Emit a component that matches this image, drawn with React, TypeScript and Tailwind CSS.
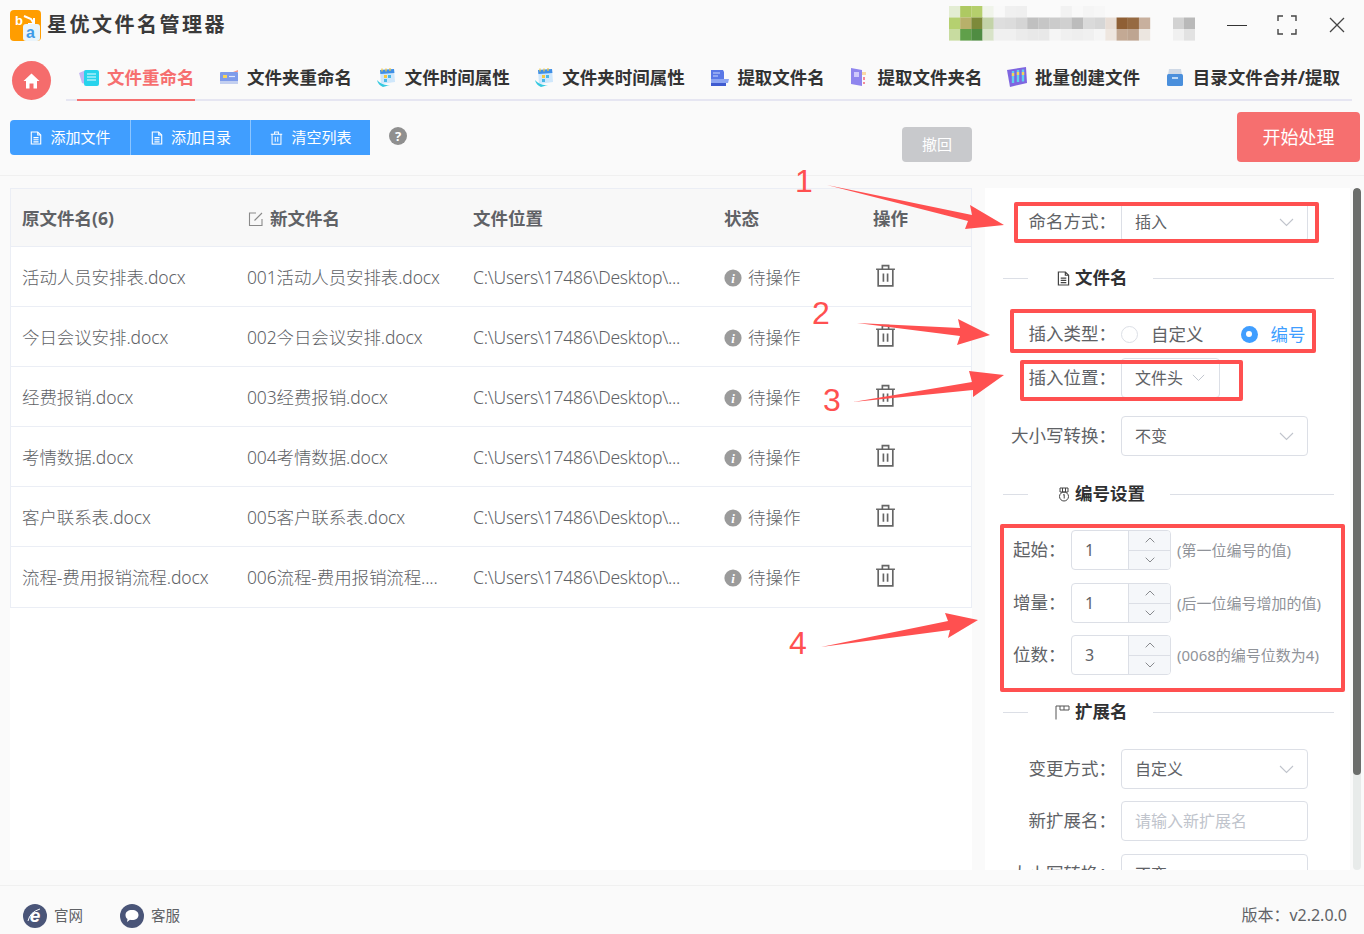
import React from 'react';

const FONT = "font-['Noto_Sans','Noto_Sans_CJK_SC',sans-serif]";

const rows = [
  { name: '活动人员安排表.docx', next: '001活动人员安排表.docx' },
  { name: '今日会议安排.docx', next: '002今日会议安排.docx' },
  { name: '经费报销.docx', next: '003经费报销.docx' },
  { name: '考情数据.docx', next: '004考情数据.docx' },
  { name: '客户联系表.docx', next: '005客户联系表.docx' },
  { name: '流程-费用报销流程.docx', next: '006流程-费用报销流程....' },
];

// mosaic that hides part of the window title
const mosaic = [
  ['#e3edd3', '#aec962', '#b5cf6c', '#f0f4ea', '#f9f9f9', '#f0f0f0', '#efefef', '#fafafa', '#fafafa', '#fafafa', '#f2f2f2', '#f9f9f9', '#f5f5f5', '#f7f7f7', '#fafafa', '#fafafa', '#fafafa', '#fafafa'],
  ['#b5d070', '#b8b06a', '#7d8a3a', '#c3d3a8', '#dedede', '#dcdcdc', '#d5d5d5', '#c0c0c0', '#c6c6c6', '#cbcbcb', '#d0d0d0', '#bcbcbc', '#dadada', '#d6d6d6', '#e8ddd5', '#8f5f35', '#966a42', '#c8b09e'],
  ['#c8dca0', '#60a04a', '#4f8c42', '#d8e3c8', '#f0f0f0', '#f0f0f0', '#ebebeb', '#e8e8e8', '#e8e8e8', '#f5f5f5', '#f0f0f0', '#eeeeee', '#f0f0f0', '#f5f5f5', '#eee6df', '#c3a994', '#bea591', '#ece6e0'],
];

function Mosaic() {
  return (
    <svg width="250" height="36" viewBox="0 0 250 36" className="shrink-0">
      {mosaic.map((row, y) =>
        row.map((c, x) => <rect key={`${x}-${y}`} x={x * 11.17} y={y * 11.5} width="11.3" height="11.6" fill={c} />)
      )}
      <rect x="224" y="11.5" width="11" height="11.6" fill="#d2d2d2" />
      <rect x="235" y="11.5" width="11" height="11.6" fill="#b9b9b9" />
      <rect x="224" y="23" width="11" height="11.6" fill="#f0f0f0" />
      <rect x="235" y="23" width="11" height="11.6" fill="#e2e2e2" />
    </svg>
  );
}

function Logo() {
  return (
    <svg width="31" height="31" viewBox="0 0 31 31" className="shrink-0">
      <rect width="31" height="31" rx="4" fill="#ff9d00" />
      <text x="5" y="15" fontSize="13" fontWeight="700" fill="#fff" fontFamily="Liberation Sans">b</text>
      <path d="M14 6 L21 9 L24 14 M24 8 V14 H18" fill="none" stroke="#fff" strokeWidth="2" />
      <rect x="13" y="14" width="17" height="17" rx="3" fill="#eaf4fb" />
      <text x="16" y="28" fontSize="16" fontWeight="700" fill="#3f9be8" fontFamily="Liberation Sans">a</text>
    </svg>
  );
}

function TabIcon({ i }: { i: number }) {
  if (i === 0)
    return (
      <svg width="20" height="18" viewBox="0 0 20 18">
        <path d="M0 5 L7 2 L9 17 L3 15Z" fill="#c3b6f2" />
        <rect x="5" y="2" width="15" height="16" rx="2" fill="#27d3ec" />
        <path d="M8 6h9M8 9h9M8 12h9" stroke="#e8fbff" strokeWidth="1.2" />
      </svg>
    );
  if (i === 1)
    return (
      <svg width="20" height="18" viewBox="0 0 20 18">
        <rect x="1" y="4" width="18" height="12" rx="1" fill="#7f9bea" />
        <rect x="1" y="13" width="18" height="3" fill="#c3cff0" />
        <rect x="4" y="7" width="4" height="3" fill="#f7d35a" />
        <path d="M10 8.5h6" stroke="#dfe6fb" strokeWidth="1.2" />
        <path d="M14 4l5-2v2z" fill="#f59a8e" />
      </svg>
    );
  if (i === 2 || i === 3)
    return (
      <svg width="19" height="20" viewBox="0 0 19 20">
        <path d="M3 3 L17 2 L18 15 L4 17Z" fill="#cfe7fb" />
        <path d="M3 3 L17 2 L17.4 6 L3.4 7Z" fill="#3f8fe6" />
        <path d="M5 1.5v3M9 1.5v3M13 1v3" stroke="#f5c842" strokeWidth="1.2" />
        <rect x="7" y="8" width="3" height="3" fill="#f5c842" />
        <rect x="11" y="8" width="3" height="3" fill="#49b8e8" />
        <rect x="7" y="12" width="3" height="3" fill="#49b8e8" />
        <path d="M0 13 Q5 19 13 18 L6 20 Q1 18 0 13Z" fill="#35c9e0" />
      </svg>
    );
  if (i === 4)
    return (
      <svg width="19" height="19" viewBox="0 0 19 19">
        <path d="M1 2h12l1 2v13H1z" fill="#5a78e6" />
        <path d="M3 5h7M3 8h5" stroke="#c9d5fb" strokeWidth="1.2" />
        <path d="M1 11h18l-1 4H1z" fill="#8da5f2" />
        <rect x="1" y="15" width="15" height="3" fill="#3f5bd0" />
      </svg>
    );
  if (i === 5)
    return (
      <svg width="18" height="20" viewBox="0 0 18 20">
        <path d="M1 1 L12 3 V19 L1 17Z" fill="#8f85ee" />
        <rect x="4" y="5" width="5" height="5" fill="#cfc9fb" />
        <rect x="12" y="5" width="4" height="3" fill="#fbd9a5" />
        <rect x="13" y="10" width="2" height="3" fill="#f58a9a" />
        <rect x="13" y="15" width="2" height="2" fill="#f58a9a" />
      </svg>
    );
  if (i === 6)
    return (
      <svg width="22" height="22" viewBox="0 0 22 22" className="shrink-0">
        <path d="M1 4 L20 1 L21 17 L4 21Z" fill="#7f66e0" />
        <path d="M7 5v12M12 4v12M17 3.5v12" stroke="#5fd0ef" strokeWidth="2.4" />
        <path d="M7 7v3M12 6v3M17 6v3" stroke="#f7d35a" strokeWidth="2.4" />
      </svg>
    );
  return (
    <svg width="18" height="19" viewBox="0 0 18 19">
      <path d="M3 1h12l1 6H2z" fill="#cfd9e6" />
      <rect x="1" y="6" width="16" height="12" rx="1.5" fill="#4a8fdc" />
      <rect x="6" y="9" width="6" height="2" fill="#bcd8f5" />
    </svg>
  );
}

function DocIcon({ color = '#fff', size = 14 }: { color?: string; size?: number }) {
  return (
    <svg width={size} height={size + 2} viewBox="0 0 14 16" fill="none" stroke={color} strokeWidth="1.3" className="shrink-0">
      <path d="M1.5 1h7.5l3.5 3.5V15h-11z" />
      <path d="M9 1v3.5h3.5M4 7.5h6M4 10h6M4 12.5h6" />
    </svg>
  );
}

function TrashIcon({ color, w, h }: { color: string; w: number; h: number }) {
  return (
    <svg width={w} height={h} viewBox="0 0 20 22" fill="none" stroke={color} strokeWidth="1.6" className="shrink-0">
      <path d="M1 5h18M7 5V1.5h6V5M3 5v16h14V5M8 9v8M12 9v8" />
    </svg>
  );
}

function Chevron({ up = false, size = 15, color = '#c0c4cc' }: { up?: boolean; size?: number; color?: string }) {
  return (
    <svg width={size} height={size * 0.6} viewBox="0 0 15 9" fill="none" stroke={color} strokeWidth="1.1">
      <path d={up ? 'M1 8 L7.5 1.5 L14 8' : 'M1 1 L7.5 7.5 L14 1'} />
    </svg>
  );
}

function InfoIcon() {
  return (
    <svg width="18" height="18" viewBox="0 0 18 18" className="shrink-0">
      <circle cx="9" cy="9" r="8.6" fill="#9b9b9b" />
      <text x="9" y="14" textAnchor="middle" fontSize="13" fontWeight="700" fontStyle="italic" fill="#fff" fontFamily="Liberation Serif">i</text>
    </svg>
  );
}

function Select({ value, className = 'w-[187px]' }: { value: string; className?: string }) {
  return (
    <div className={`${className} h-10 shrink-0 bg-white border border-[#dcdfe6] rounded-[4px] flex items-center justify-between pl-[13px] pr-[13px] text-[16px] text-[#606266]`}>
      <span>{value}</span>
      <Chevron />
    </div>
  );
}

function FormRow({ label, className = '', children }: { label: string; className?: string; children: React.ReactNode }) {
  return (
    <div className={`flex items-center h-10 ${className}`}>
      <div className="w-[131px] shrink-0 -mt-[2px] text-right text-[17.5px] text-[#606266] whitespace-nowrap">{label}</div>
      <div className="ml-[5px] flex items-center">{children}</div>
    </div>
  );
}

function Section({ title, icon, className = '' }: { title: string; icon: React.ReactNode; className?: string }) {
  return (
    <div className={`flex items-center h-6 ml-[18px] w-[331px] ${className}`}>
      <div className="w-[25px] h-px bg-[#dcdfe6]" />
      <div className="w-[42px] shrink-0 flex justify-end">{icon}</div>
      <div className="ml-[5px] -mt-[2px] text-[17.5px] font-bold text-[#303133] whitespace-nowrap">{title}</div>
      <div className="flex-1 ml-[25px] h-px bg-[#dcdfe6]" />
    </div>
  );
}

function NumberRow({ label, value, hint, className = '' }: { label: string; value: string; hint: string; className?: string }) {
  return (
    <div className={`flex items-center h-10 pl-[28px] ${className}`}>
      <div className="w-[58px] shrink-0 -mt-[2px] text-[17.5px] text-[#606266]">{label}</div>
      <div className="w-[100px] h-10 shrink-0 flex bg-white border border-[#dcdfe6] rounded-[4px] overflow-hidden">
        <div className="w-[56px] pl-[13px] text-[16px] leading-[38px] text-[#606266]">{value}</div>
        <div className="flex-1 flex flex-col bg-[#f5f7fa] border-l border-[#dcdfe6]">
          <div className="flex-1 flex items-center justify-center border-b border-[#dcdfe6]"><Chevron up size={10} color="#606266" /></div>
          <div className="flex-1 flex items-center justify-center"><Chevron size={10} color="#606266" /></div>
        </div>
      </div>
      <div className="ml-[6px] text-[15px] text-[#909399] whitespace-nowrap">{hint}</div>
    </div>
  );
}

export default function App() {
  return (
    <div className={`relative w-[1364px] h-[934px] overflow-hidden bg-[#fafafa] ${FONT}`}>
      {/* title bar */}
      <div className="h-[50px] flex items-center pl-[10px]">
        <Logo />
        <div className="ml-[6px] text-[20px] font-bold tracking-[2.5px] text-[#3a3a3a] whitespace-nowrap">星优文件名管理器</div>
        <div className="ml-[722px] -mt-[3px]"><Mosaic /></div>
        <div className="ml-[28px] w-5 h-px bg-[#333]" />
        <svg width="20" height="20" viewBox="0 0 20 20" fill="none" stroke="#444" strokeWidth="1.4" className="ml-[30px]">
          <path d="M1 6V1h5M14 1h5v5M19 14v5h-5M6 19H1v-5" />
        </svg>
        <svg width="16" height="16" viewBox="0 0 16 16" fill="none" stroke="#444" strokeWidth="1.3" className="ml-[32px]">
          <path d="M1 1l14 14M15 1L1 15" />
        </svg>
      </div>

      {/* tabs */}
      <div className="h-[51px] flex pl-[12px]">
        <div className="w-[39px] h-[39px] mt-[11px] rounded-full bg-[#f56c6c] flex items-center justify-center shrink-0">
          <svg width="17" height="16" viewBox="0 0 17 16" fill="#fff">
            <path d="M8.5 0.5 L16.5 8 H14 V15.5 H10.5 V10.5 H6.5 V15.5 H3 V8 H0.5Z" />
          </svg>
        </div>
        <div className="ml-[15px] w-[1286px] h-[51px] flex border-b-2 border-[#e6e6f2] pl-[11px]">
          {['文件重命名', '文件夹重命名', '文件时间属性', '文件夹时间属性', '提取文件名', '提取文件夹名', '批量创建文件', '目录文件合并/提取'].map((t, i) => (
            <div
              key={t}
              className={`h-[51px] flex items-center whitespace-nowrap text-[17.5px] font-bold border-b-2 pt-[5px] pl-[2px] mr-[22.6px] ${i === 0 ? 'text-[#f66f6f] border-[#f66f6f]' : 'text-[#333] border-transparent'}`}
            >
              <div className="w-[20px] flex justify-center mr-[8px]"><TabIcon i={i} /></div>
              {t}
            </div>
          ))}
        </div>
      </div>

      {/* toolbar */}
      <div className="h-[75px] flex border-b border-[#f0f0f0]">
        <div className="ml-[10px] mt-[19px] h-[35px] flex bg-[#409eff] rounded-l-[4px] text-white text-[15px]">
          <div className="w-[121px] pl-[1px] flex items-center justify-center gap-[8px] border-r border-[#8cc5ff]"><DocIcon size={12} />添加文件</div>
          <div className="w-[120px] pl-[1px] flex items-center justify-center gap-[8px] border-r border-[#8cc5ff]"><DocIcon size={12} />添加目录</div>
          <div className="w-[119px] pl-[1px] flex items-center justify-center gap-[8px]"><TrashIcon color="#fff" w={13} h={14} />清空列表</div>
        </div>
        <div className="ml-[19px] mt-[26px] w-[18px] h-[18px] rounded-full bg-[#8f8f8f] text-white text-[13px] font-bold leading-[18px] text-center">?</div>
        <div className="ml-[495px] mt-[26px] w-[70px] h-[35px] rounded-[4px] bg-[#c8c9cc] text-white text-[15px] flex items-center justify-center">撤回</div>
        <div className="ml-[265px] mt-[11px] w-[123px] h-[50px] rounded-[4px] bg-[#f66f6f] text-white text-[18px] flex items-center justify-center">开始处理</div>
      </div>

      {/* main */}
      <div className="flex pt-[12px] h-[709px] pl-[10px]">
        <div className="w-[962px] h-[682px] bg-white">
          <div className="border border-[#ebeef5]">
            <div className="grid grid-cols-[225px_226px_251px_149px_1fr] h-[58px] pt-[2px] items-center bg-[#f8f8f8] border-b border-[#ebeef5] text-[17.5px] font-bold text-[#606266]">
              <div className="pl-[11px]">原文件名(6)</div>
              <div className="pl-[12px] flex items-center gap-[6px]">
                <svg width="16" height="16" viewBox="0 0 16 16" fill="none" stroke="#8a8a8a" strokeWidth="1.1">
                  <path d="M8 2H1.5v12.5H14V8M6.5 9.5 L14 2" />
                </svg>
                新文件名
              </div>
              <div className="pl-[11px]">文件位置</div>
              <div className="pl-[11px]">状态</div>
              <div className="pl-[11px]">操作</div>
            </div>
            {rows.map((r, i) => (
              <div key={r.name} className={`grid grid-cols-[225px_226px_251px_149px_1fr] h-[60px] pt-[2px] items-center text-[17.5px] font-light text-[#606266] whitespace-nowrap border-b ${i < 5 ? 'border-[#ebeef5]' : 'border-transparent'}`}>
                <div className="pl-[11px] tracking-[-0.1px]">{r.name}</div>
                <div className="pl-[11px] tracking-[-0.13px]">{r.next}</div>
                <div className="pl-[11px] tracking-[-0.25px]">C:\Users\17486\Desktop\...</div>
                <div className="pl-[11px] flex items-center gap-[6px]"><InfoIcon />待操作</div>
                <div className="pl-[13px] -mt-[4px]"><TrashIcon color="#666" w={21} h={23} /></div>
              </div>
            ))}
          </div>
        </div>

        {/* settings panel */}
        <div className="ml-[13px] w-[365px] h-[682px] bg-white overflow-hidden pt-[14px] shrink-0">
          <FormRow label="命名方式："><Select value="插入" /></FormRow>
          <Section title="文件名" className="mt-6" icon={<DocIcon color="#444" size={13} />} />
          <FormRow label="插入类型：" className="mt-6">
            <div className="flex items-center text-[17.5px] text-[#606266]">
              <div className="w-[17px] h-[17px] rounded-full border border-[#dcdfe6] bg-white" />
              <span className="ml-[13px]">自定义</span>
              <div className="ml-[37px] w-[17px] h-[17px] rounded-full bg-[#409eff] flex items-center justify-center">
                <div className="w-[6px] h-[6px] rounded-full bg-white" />
              </div>
              <span className="ml-[13px] text-[#409eff]">编号</span>
            </div>
          </FormRow>
          <FormRow label="插入位置：" className="mt-1">
            <div className="w-[99px] h-10 bg-white border border-[#dcdfe6] rounded-[4px] flex items-center pl-[13px] text-[16px] text-[#606266] gap-[9px] whitespace-nowrap">
              文件头<Chevron size={13} />
            </div>
          </FormRow>
          <FormRow label="大小写转换：" className="mt-[18px]"><Select value="不变" /></FormRow>
          <Section
            title="编号设置"
            className="mt-[26px]"
            icon={
              <svg width="12" height="15" viewBox="0 0 12 15" fill="none" stroke="#444" strokeWidth="1">
                <path d="M2 1h8v4H2zM4.5 1v4M7.5 1v4" />
                <circle cx="6" cy="9.5" r="4.5" />
                <path d="M5.2 8 L6.2 7.4 V11.5" />
              </svg>
            }
          />
          <NumberRow label="起始：" value="1" hint="(第一位编号的值)" className="mt-6" />
          <NumberRow label="增量：" value="1" hint="(后一位编号增加的值)" className="mt-[13px]" />
          <NumberRow label="位数：" value="3" hint="(0068的编号位数为4)" className="mt-[12px]" />
          <Section
            title="扩展名"
            className="mt-[25px]"
            icon={
              <svg width="15" height="15" viewBox="0 0 15 15" fill="none" stroke="#555" strokeWidth="1">
                <path d="M1 14.5V1h13v4H5V1M9 1v4" />
              </svg>
            }
          />
          <FormRow label="变更方式：" className="mt-[25px]"><Select value="自定义" /></FormRow>
          <FormRow label="新扩展名：" className="mt-[12px]">
            <div className="w-[187px] h-10 bg-white border border-[#dcdfe6] rounded-[4px] flex items-center pl-[13px] text-[16px] text-[#c0c4cc]">请输入新扩展名</div>
          </FormRow>
          <FormRow label="大小写转换：" className="mt-[13px]"><Select value="不变" /></FormRow>
        </div>

        {/* scrollbar */}
        <div className="ml-[3px] w-2 h-[682px] rounded-[4px] bg-[#e8ebea] overflow-hidden shrink-0">
          <div className="h-[587px] bg-[#6b6d6b] rounded-[4px]" />
        </div>
      </div>

      {/* footer */}
      <div className="h-[49px] border-t border-[#f0f0f0] flex items-center pt-[12px] pl-[23px] pr-[17px] text-[14.5px] text-[#606266]">
        <svg width="24" height="24" viewBox="0 0 24 24">
          <circle cx="12" cy="12" r="12" fill="#4a5578" />
          <text x="12" y="18" textAnchor="middle" fontSize="19" fontWeight="700" fontStyle="italic" fill="#fff" fontFamily="Liberation Sans">e</text>
          <path d="M5 17 Q7 8 17 5" fill="none" stroke="#fff" strokeWidth="1" />
        </svg>
        <span className="ml-[7px]">官网</span>
        <svg width="24" height="24" viewBox="0 0 24 24" className="ml-[37px]">
          <circle cx="12" cy="12" r="12" fill="#4a5578" />
          <path d="M12 6c4 0 6.5 2 6.5 5s-2.5 5-6.5 5c-1 0-1.5 0-2 -.2L7 18l.5-3C6 14 5.5 12.5 5.5 11c0-3 2.5-5 6.5-5z" fill="#fff" />
        </svg>
        <span className="ml-[7px]">客服</span>
        <span className="ml-auto -mt-[3px] text-[16px]">版本：v2.2.0.0</span>
      </div>

      {/* annotations drawn over the screenshot */}
      <svg width="1364" height="934" viewBox="0 0 1364 934" className="absolute left-0 top-0 pointer-events-none">
        <path d="M827 185 L972 215 L970 205 L1004 225 L965 229 L968 221Z" fill="#ff5050" />
        <path d="M857 323 L960 328 L958 319 L990 335 L957 345 L960 336Z" fill="#ff5050" />
        <path d="M853 402 L972 382 L969 371 L1004 375 L973 397 L973 390Z" fill="#ff5050" />
        <path d="M821 647 L948 621 L945 613 L978 620 L948 638 L950 630Z" fill="#ff5050" />
        <g fill="none" stroke="#ff5050" strokeWidth="4" strokeLinejoin="round">
          <rect x="1016" y="204" width="301" height="37" />
          <rect x="1012" y="311" width="302" height="40" />
          <rect x="1022" y="362" width="219" height="37" />
          <rect x="1002" y="526" width="341" height="164" />
        </g>
      </svg>
      <div className="absolute left-[795px] top-[161px] text-[32px] leading-[40px] text-[#ff5050] font-['Liberation_Sans',sans-serif]">1</div>
      <div className="absolute left-[812px] top-[293px] text-[32px] leading-[40px] text-[#ff5050] font-['Liberation_Sans',sans-serif]">2</div>
      <div className="absolute left-[823px] top-[380px] text-[32px] leading-[40px] text-[#ff5050] font-['Liberation_Sans',sans-serif]">3</div>
      <div className="absolute left-[789px] top-[623px] text-[32px] leading-[40px] text-[#ff5050] font-['Liberation_Sans',sans-serif]">4</div>
    </div>
  );
}
